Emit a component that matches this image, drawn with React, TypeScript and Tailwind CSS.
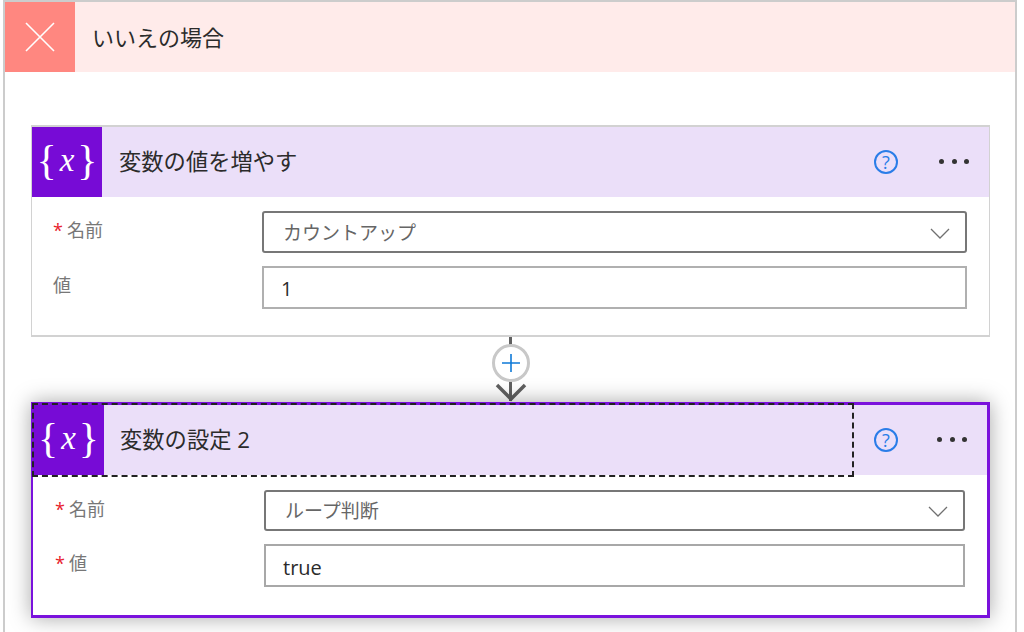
const font = { fontFamily: '"Open Sans", "Noto Sans CJK JP", sans-serif' }

function VariableIcon({ width }: { width: string }) {
  return (
    <div
      className={`flex h-[70px] shrink-0 items-center justify-center bg-[#770bd6] pb-[5px] text-white ${width}`}
      style={{ fontFamily: '"Liberation Serif", serif' }}
    >
      <span className="text-[42px] font-light leading-none">{'{'}</span>
      <span className="mx-[3px] mt-[2px] text-[33px] italic leading-none">x</span>
      <span className="text-[42px] font-light leading-none">{'}'}</span>
    </div>
  )
}

function Chevron() {
  return (
    <svg width="20" height="11" viewBox="0 0 20 11" fill="none" stroke="#707070" strokeWidth="1.3">
      <path d="M1 1l9 9 9-9" />
    </svg>
  )
}

function HelpIcon() {
  return (
    <div className="flex h-6 w-6 items-center justify-center rounded-full border-2 border-[#2a7de8] text-[18px] leading-none text-[#2a7de8]">
      ?
    </div>
  )
}

function MoreDots() {
  return (
    <div className="mb-[1px] flex w-[30px] items-center justify-between">
      <span className="h-[5px] w-[5px] rounded-full bg-[#333333]" />
      <span className="h-[5px] w-[5px] rounded-full bg-[#333333]" />
      <span className="h-[5px] w-[5px] rounded-full bg-[#333333]" />
    </div>
  )
}

function Label({ text, required }: { text: string; required?: boolean }) {
  return (
    <div className="mt-[7px] flex w-[209px] shrink-0 items-center text-[18px] leading-6 text-[#777777]">
      {required && <span className="w-[14px] text-[#e8222c]">*</span>}
      {text}
    </div>
  )
}

export default function App() {
  return (
    <div className="h-[632px] w-[1024px] overflow-hidden bg-white" style={font}>
      <div className="ml-[3px] h-[640px] w-[1014px] border-x-2 border-t-2 border-[#cccccc]">
        <div className="flex h-[70px] items-center bg-[#ffebea]">
          <div className="flex h-[70px] w-[70px] items-center justify-center bg-[#ff8780]">
            <svg width="30" height="30" viewBox="0 0 30 30" stroke="#ffffff" strokeWidth="1.6">
              <path d="M1 1l28 28M29 1L1 29" />
            </svg>
          </div>
          <span className="ml-[17px] text-[22px] text-[#2b2b2b]">いいえの場合</span>
        </div>

        <div className="ml-[26px] mt-[53px] h-[212px] w-[959px] border-x border-y-2 border-[#d2d2d2]">
          <div className="flex h-[70px] items-center bg-[#ebdff9]">
            <VariableIcon width="w-[70px]" />
            <span className="ml-[17px] text-[22.3px] text-[#2b2b2b]">変数の値を増やす</span>
            <div className="ml-auto mr-[20px] flex items-center gap-[41px]">
              <HelpIcon />
              <MoreDots />
            </div>
          </div>
          <div className="flex flex-col gap-[13px] pl-[21px] pt-[14px]">
            <div className="flex items-start">
              <Label text="名前" required />
              <div className="flex h-[42px] w-[705px] items-center justify-between rounded-[3px] border-2 border-[#777777] pl-[19px] pr-[15px] pt-[2px] text-[19px] text-[#666666]">
                カウントアップ
                <Chevron />
              </div>
            </div>
            <div className="flex items-start">
              <Label text="値" />
              <div className="flex h-[43px] w-[705px] items-center border-2 border-[#b0b0b0] pl-[17px] pt-[3px] text-[20px] text-[#2b2b2b]">
                1
              </div>
            </div>
          </div>
        </div>

        <div className="relative ml-[26px] flex h-[65px] w-[959px] justify-center">
          <div className="absolute top-0 h-[64px] w-[3px] bg-[#606060]" />
          <div className="absolute top-[7px] flex h-[38px] w-[38px] items-center justify-center rounded-full border-[3px] border-[#c8c8c8] bg-white">
            <svg width="18" height="18" viewBox="0 0 18 18" stroke="#0f7ad8" strokeWidth="1.6">
              <path d="M9 0v18M0 9h18" />
            </svg>
          </div>
          <svg className="absolute top-[46px]" width="32" height="20" viewBox="0 0 32 20" fill="none" stroke="#606060" strokeWidth="3.500">
            <path d="M2 2l14 14L30 2" />
          </svg>
        </div>

        <div className="relative ml-[26px] h-[216px] w-[959px] border-y-[3px] border-l-2 border-r-[3px] border-[#7a12dc] shadow-[0_0_20px_rgba(0,0,0,0.35)]">
          <div className="flex h-[70px] items-center bg-[#ebdff9]">
            <VariableIcon width="w-[71px]" />
            <span className="ml-[16px] text-[22.3px] text-[#2b2b2b]">変数の設定 2</span>
            <div className="ml-auto mr-[20px] flex items-center gap-[39px]">
              <HelpIcon />
              <MoreDots />
            </div>
          </div>
          <div className="pointer-events-none absolute left-[-1px] top-[-2px] h-[74px] w-[822px] border-2 border-dashed border-[#222222]" />
          <div className="flex flex-col gap-[13px] pl-[22px] pt-[15px]">
            <div className="flex items-start">
              <Label text="名前" required />
              <div className="flex h-[41px] w-[701px] items-center justify-between rounded-[3px] border-2 border-[#777777] pl-[19px] pr-[15px] pt-[2px] text-[19px] text-[#666666]">
                ループ判断
                <Chevron />
              </div>
            </div>
            <div className="flex items-start">
              <Label text="値" required />
              <div className="flex h-[43px] w-[701px] items-center border-2 border-[#a8a8a8] pl-[17px] pt-[4px] text-[20px] text-[#2b2b2b]">
                true
              </div>
            </div>
          </div>
        </div>
      </div>
    </div>
  )
}
